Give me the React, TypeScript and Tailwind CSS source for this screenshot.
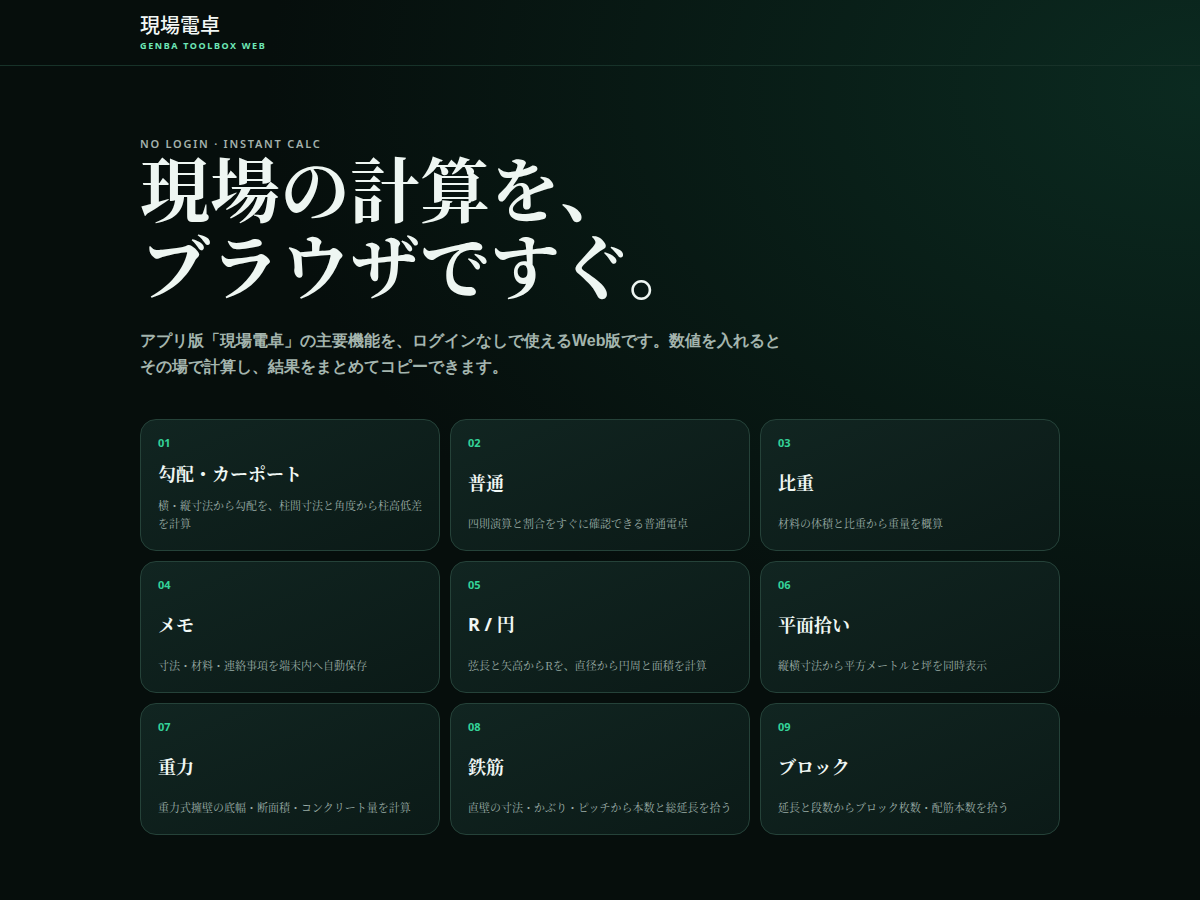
import React from "react";

const tools = [
  { no: "01", title: "勾配・カーポート", desc: "横・縦寸法から勾配を、柱間寸法と角度から柱高低差を計算" },
  { no: "02", title: "普通", desc: "四則演算と割合をすぐに確認できる普通電卓" },
  { no: "03", title: "比重", desc: "材料の体積と比重から重量を概算" },
  { no: "04", title: "メモ", desc: "寸法・材料・連絡事項を端末内へ自動保存" },
  { no: "05", title: "R / 円", latin: "R / ", rest: "円", desc: "弦長と矢高からRを、直径から円周と面積を計算" },
  { no: "06", title: "平面拾い", desc: "縦横寸法から平方メートルと坪を同時表示" },
  { no: "07", title: "重力", desc: "重力式擁壁の底幅・断面積・コンクリート量を計算" },
  { no: "08", title: "鉄筋", desc: "直壁の寸法・かぶり・ピッチから本数と総延長を拾う" },
  { no: "09", title: "ブロック", desc: "延長と段数からブロック枚数・配筋本数を拾う" },
];

type Tool = { no: string; title: string; latin?: string; rest?: string; desc: string };

const ToolCard = ({ no, title, latin, rest, desc }: Tool) => (
  <div className="flex h-[132px] flex-col justify-between rounded-2xl border border-[#254239] bg-gradient-to-br from-[#112521] to-[#0b1a17] px-[17px] pt-[15px] pb-[18px]">
    <div className="text-[11px] font-bold leading-4 text-[#34d399] [font-family:'Noto_Sans',sans-serif]">{no}</div>
    <div className="mt-[-2px] text-[18px] font-bold leading-6 text-[#f0f7f4] [font-family:'Noto_Serif_CJK_JP',serif]">
      {latin ? (
        <>
          <span className="[font-family:'Noto_Sans',sans-serif]">{latin}</span>
          {rest}
        </>
      ) : (
        title
      )}
    </div>
    <div className="text-[11px] leading-[18px] text-[#9aaca6] [font-family:'Noto_Serif_CJK_JP','Liberation_Serif',serif]">{desc}</div>
  </div>
);

export default function App() {
  return (
    <div className="min-h-[900px] bg-[#060e0c] bg-[radial-gradient(ellipse_at_100%_10%,#0b2a20_0%,#08160f00_55%)] text-white">
      <header className="border-b border-[#173229]">
        <div className="mx-auto w-[920px] pt-[11px] pb-[13px]">
          <div className="text-[20px] font-medium leading-7 text-[#f2f7f5] [font-family:'Noto_Sans_CJK_JP',sans-serif]">現場電卓</div>
          <div className="mt-[1px] text-[9px] font-bold leading-3 tracking-[0.18em] text-[#6ee7b7] [font-family:'Noto_Sans',sans-serif]">GENBA TOOLBOX WEB</div>
        </div>
      </header>
      <main className="mx-auto w-[920px] pt-[70px] pb-[64px]">
        <div className="text-[11px] font-semibold leading-4 tracking-[0.16em] text-[#a4b2ad] [font-family:'Noto_Sans',sans-serif]">NO LOGIN · INSTANT CALC</div>
        <h1 className="mt-[-4px] text-[70px] font-bold leading-[77px] text-[#eef6f2] [font-family:'Noto_Serif_CJK_JP',serif]">
          現場の計算を、<br />ブラウザですぐ。
        </h1>
        <p className="mt-[26px] text-[16px] font-bold leading-[26px] text-[#a4b5ae] [font-family:sans-serif]">
          アプリ版「現場電卓」の主要機能を、ログインなしで使えるWeb版です。数値を入れると<br />その場で計算し、結果をまとめてコピーできます。
        </p>
        <div className="mt-[39px] grid grid-cols-3 gap-[10px]">
          {tools.map((t) => (
            <ToolCard key={t.no} {...t} />
          ))}
        </div>
      </main>
    </div>
  );
}
